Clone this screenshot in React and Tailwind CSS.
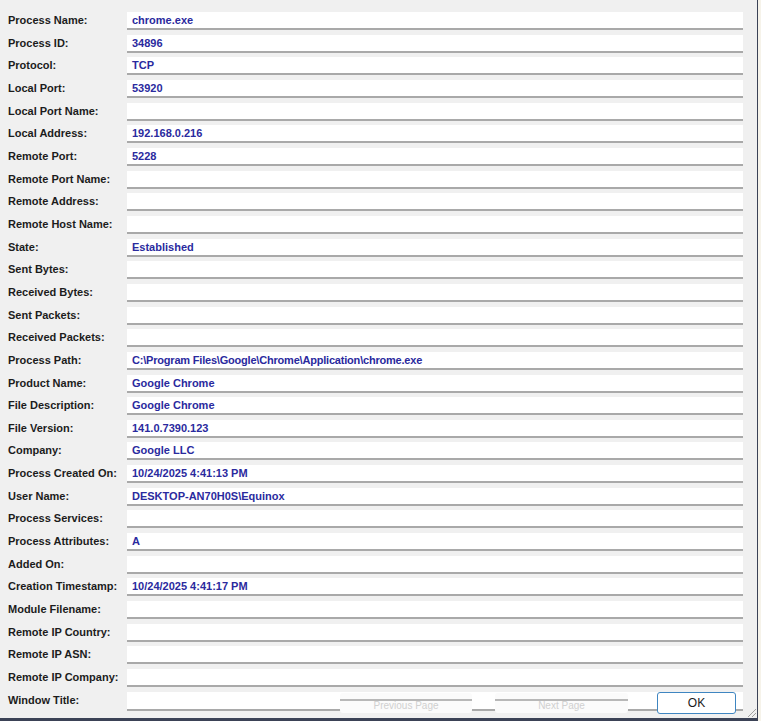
import React from "react";

const rows = [
  ["Process Name:", "chrome.exe"],
  ["Process ID:", "34896"],
  ["Protocol:", "TCP"],
  ["Local Port:", "53920"],
  ["Local Port Name:", ""],
  ["Local Address:", "192.168.0.216"],
  ["Remote Port:", "5228"],
  ["Remote Port Name:", ""],
  ["Remote Address:", ""],
  ["Remote Host Name:", ""],
  ["State:", "Established"],
  ["Sent Bytes:", ""],
  ["Received Bytes:", ""],
  ["Sent Packets:", ""],
  ["Received Packets:", ""],
  ["Process Path:", "C:\\Program Files\\Google\\Chrome\\Application\\chrome.exe"],
  ["Product Name:", "Google Chrome"],
  ["File Description:", "Google Chrome"],
  ["File Version:", "141.0.7390.123"],
  ["Company:", "Google LLC"],
  ["Process Created On:", "10/24/2025 4:41:13 PM"],
  ["User Name:", "DESKTOP-AN70H0S\\Equinox"],
  ["Process Services:", ""],
  ["Process Attributes:", "A"],
  ["Added On:", ""],
  ["Creation Timestamp:", "10/24/2025 4:41:17 PM"],
  ["Module Filename:", ""],
  ["Remote IP Country:", ""],
  ["Remote IP ASN:", ""],
  ["Remote IP Company:", ""],
];

function Row({ label, value }) {
  const tight = value.length > 40;
  return (
    <div className="flex h-[22.667px] items-start">
      <div className="w-[127px] shrink-0 pl-[8px] text-[11px] font-bold leading-[17px] text-[#1c1c1c]">
        {label}
      </div>
      <div
        className={
          "h-[18px] w-[616px] shrink-0 border-b-2 border-[#a9a9a9] bg-white pl-[5px] text-[11px] font-bold leading-[16px] text-[#2a2a9e] " +
          (tight ? "tracking-[-0.2px]" : "")
        }
      >
        {value}
      </div>
    </div>
  );
}

function GhostButton({ text, className }) {
  return (
    <div className={"relative mt-[1px] h-[20px] shrink-0 rounded-[3px] bg-[#fbfbfb] " + className}>
      <div className="absolute left-0 right-0 top-[6px] h-[2px] bg-[#b8b8b8]" />
      <div className="absolute left-0 right-0 top-[8px] text-center text-[10px] leading-[10px] text-[#d0d0d0]">
        {text}
      </div>
    </div>
  );
}

export default function App() {
  return (
    <div
      className="flex h-[721px] w-[761px] bg-[#f6f3ea]"
      style={{ fontFamily: '"Liberation Sans", Arial, sans-serif' }}
    >
      <div className="relative h-[721px] w-[758px] border-b-[3px] border-r border-[#3b4256] bg-[#f0f0f0] pt-[12px]">
        <div className="flex flex-col">
          {rows.map(([l, v]) => (
            <Row key={l} label={l} value={v} />
          ))}
          <div className="flex h-[23px] items-start">
            <div className="w-[127px] shrink-0 pl-[8px] text-[11px] font-bold leading-[17px] text-[#1c1c1c]">
              Window Title:
            </div>
            <div className="relative flex h-[23px] w-[616px] shrink-0 items-start">
              <div className="absolute left-0 right-0 top-0 h-[19px] border-b-2 border-[#a9a9a9] bg-white" />
              <div className="relative ml-[213px] flex items-start">
                <GhostButton text="Previous Page" className="w-[132px]" />
                <div className="w-[23px]" />
                <GhostButton text="Next Page" className="w-[133px]" />
                <div className="w-[29px]" />
                <div className="flex h-[22px] w-[79px] items-center justify-center rounded-[3px] border border-[#3f86c1] bg-white text-[12px] text-[#1a1a1a]">
                  OK
                </div>
              </div>
            </div>
          </div>
        </div>
        <svg className="absolute bottom-[1px] right-[1px]" width="10" height="10" viewBox="0 0 10 10">
          <line x1="2" y1="10" x2="10" y2="2" stroke="#a0a0a0" strokeWidth="1" />
          <line x1="6" y1="10" x2="10" y2="6" stroke="#a0a0a0" strokeWidth="1" />
        </svg>
      </div>
    </div>
  );
}
